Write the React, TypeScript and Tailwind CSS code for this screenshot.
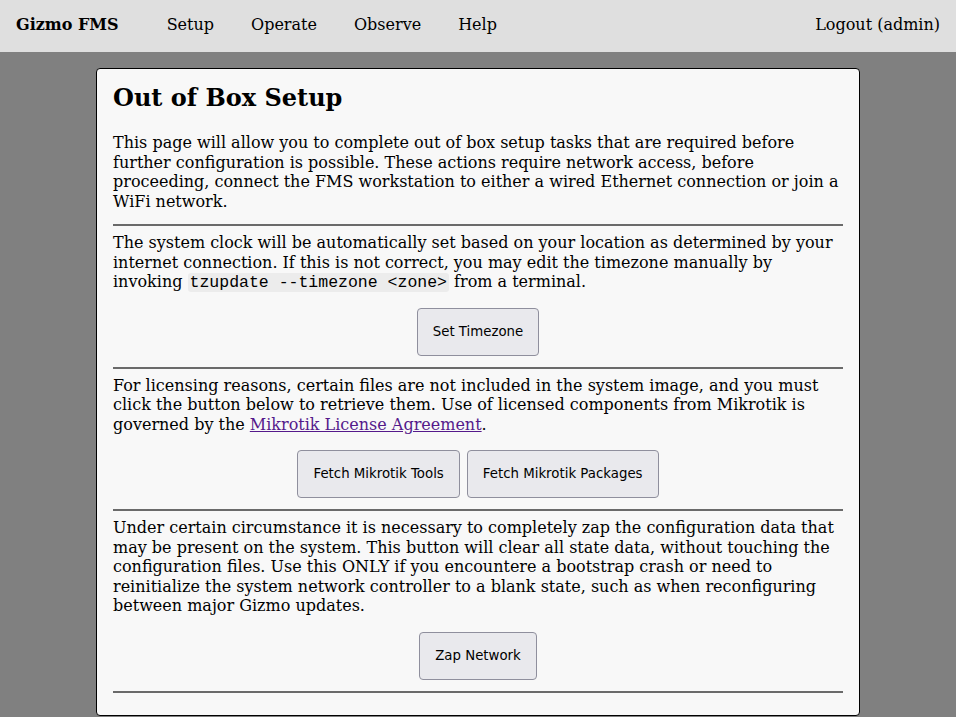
const serif = "font-['DejaVu_Serif',serif]";

const Btn = ({ children }: { children: React.ReactNode }) => (
  <button className="px-[15px] h-[48px] rounded-[4px] border border-[#8f8f9d] bg-[#e9e9ed] text-[13.33px] text-black font-['DejaVu_Sans',sans-serif]">
    {children}
  </button>
);

const Rule = () => <hr className="border-0 border-t-2 border-[#6a6a6a] my-0" />;

export default function App() {
  return (
    <div className={`min-h-screen bg-[#808080] ${serif} text-[16px] text-black`}>
      {/* Top bar */}
      <nav className="h-[52px] bg-[#dfdfdf] flex items-center justify-between px-4 pb-[3px]">
        <div className="flex items-center">
          <span className="font-bold mr-[48px]">Gizmo FMS</span>
          <a className="mr-[37px]">Setup</a>
          <a className="mr-[37px]">Operate</a>
          <a className="mr-[37px]">Observe</a>
          <a>Help</a>
        </div>
        <a>Logout (admin)</a>
      </nav>

      {/* Setup card */}
      <div className="mx-24 mt-4 bg-[#f8f8f8] border border-black rounded-[4px] px-4 pt-[14px] pb-[22px] leading-[19.5px]">
        <h1 className="text-[24px] font-bold leading-[30px] mb-[20px]">Out of Box Setup</h1>
        <p className="mb-[13px]">
          This page will allow you to complete out of box setup tasks that are required before
          further configuration is possible. These actions require network access, before
          proceeding, connect the FMS workstation to either a wired Ethernet connection or join a
          WiFi network.
        </p>
        <Rule />

        <p className="mt-[7px]">
          The system clock will be automatically set based on your location as determined by your
          internet connection. If this is not correct, you may edit the timezone manually by
          invoking{" "}
          <code className="font-['Liberation_Mono',monospace] text-[16.5px] leading-[0] bg-[#ececec] rounded-[3px] px-[2px]">
            tzupdate --timezone &lt;zone&gt;
          </code>{" "}
          from a terminal.
        </p>
        <div className="flex justify-center gap-[7px] mt-[16px] mb-[11px]">
          <Btn>Set Timezone</Btn>
        </div>
        <Rule />

        <p className="mt-[7px]">
          For licensing reasons, certain files are not included in the system image, and you must
          click the button below to retrieve them. Use of licensed components from Mikrotik is
          governed by the{" "}
          <a className="text-[#551a8b] underline">Mikrotik License Agreement</a>.
        </p>
        <div className="flex justify-center gap-[7px] mt-[16px] mb-[11px]">
          <Btn>Fetch Mikrotik Tools</Btn>
          <Btn>Fetch Mikrotik Packages</Btn>
        </div>
        <Rule />

        <p className="mt-[7px]">
          Under certain circumstance it is necessary to completely zap the configuration data that
          may be present on the system. This button will clear all state data, without touching the
          configuration files. Use this ONLY if you encountere a bootstrap crash or need to
          reinitialize the system network controller to a blank state, such as when reconfiguring
          between major Gizmo updates.
        </p>
        <div className="flex justify-center gap-[7px] mt-[16px] mb-[11px]">
          <Btn>Zap Network</Btn>
        </div>
        <Rule />
      </div>
    </div>
  );
}
